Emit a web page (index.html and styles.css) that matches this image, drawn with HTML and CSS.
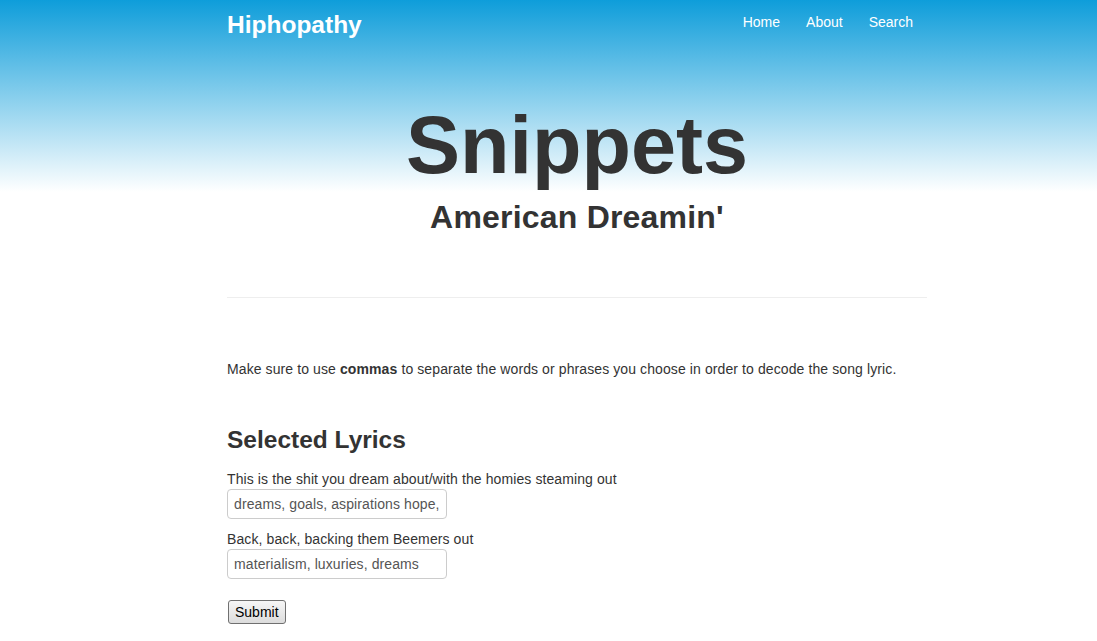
FILE: index.html
```html
<!DOCTYPE html>
<html>
<head>
<meta charset="utf-8">
<title>Hiphopathy - Snippets</title>
<link rel="stylesheet" href="styles.css">
</head>
<body>
<div class="hero">
  <div class="container">
    <nav class="navbar">
      <a class="brand" href="#">Hiphopathy</a>
      <ul class="nav">
        <li><a href="#">Home</a></li>
        <li><a href="#">About</a></li>
        <li><a href="#">Search</a></li>
      </ul>
    </nav>
    <header class="title">
      <h1>Snippets</h1>
      <h2>American Dreamin'</h2>
    </header>
  </div>
</div>
<div class="container">
  <hr class="divider">
  <p class="note">Make sure to use <strong>commas</strong> to separate the words or phrases you choose in order to decode the song lyric.</p>
  <h3 class="section-title">Selected Lyrics</h3>
  <form class="lyrics-form">
    <label class="lyric">This is the shit you dream about/with the homies steaming out</label>
    <input class="field" type="text" value="dreams, goals, aspirations hope, ">
    <label class="lyric">Back, back, backing them Beemers out</label>
    <input class="field" type="text" value="materialism, luxuries, dreams">
    <button class="submit" type="button">Submit</button>
  </form>
</div>
</body>
</html>
```

FILE: styles.css
```css
* { box-sizing: border-box; }
html, body {
  margin: 0;
  padding: 0;
  background: #fff;
  color: #333;
  font-family: "Liberation Sans", Arial, sans-serif;
  font-size: 14px;
  line-height: 20px;
  letter-spacing: 0.1px;
}
.hero {
  background: linear-gradient(to bottom, #0e9dda 0px, #fff 192px);
  height: 192px;
}
.container {
  width: 700px;
  margin-left: 227px;
}
.navbar {
  display: flex;
  justify-content: space-between;
  align-items: flex-start;
  height: 50px;
}
.brand {
  color: #fff;
  font-weight: bold;
  font-size: 24.5px;
  line-height: 24px;
  padding-top: 13px;
  text-decoration: none;
  letter-spacing: 0;
}
.nav {
  display: flex;
  list-style: none;
  margin: 0;
  padding: 0 14px 0 0;
  gap: 26px;
}
.nav a {
  display: block;
  color: #fff;
  text-decoration: none;
  font-size: 14px;
  line-height: 20px;
  padding-top: 12px;
  letter-spacing: 0;
}
.title {
  text-align: center;
  padding-top: 55px;
  letter-spacing: 0;
}
.title h1 {
  margin: 0;
  font-size: 81px;
  line-height: 80px;
  font-weight: bold;
  color: #333;
}
.title h2 {
  margin: 12px 0 0 0;
  font-size: 32px;
  line-height: 40px;
  font-weight: bold;
  color: #333;
  letter-spacing: 0.2px;
}
.divider {
  border: 0;
  border-top: 1px solid #eee;
  margin: 105px 0 0 0;
}
.note {
  margin: 61px 0 0 0;
}
.section-title {
  font-size: 24.5px;
  line-height: 30px;
  margin: 46px 0 0 0;
  font-weight: bold;
  letter-spacing: 0;
}
.lyrics-form {
  display: flex;
  flex-direction: column;
  align-items: flex-start;
  margin-top: 14px;
}
.lyric {
  display: block;
  line-height: 20px;
}
.field {
  width: 220px;
  height: 30px;
  border: 1px solid #ccc;
  border-radius: 4px;
  padding: 4px 6px;
  font-family: "Liberation Sans", Arial, sans-serif;
  font-size: 14px;
  color: #555;
  margin-bottom: 10px;
  letter-spacing: 0.1px;
}
.submit {
  margin-top: 11px;
  font-family: "Liberation Sans", Arial, sans-serif;
  font-size: 14px;
  padding: 2px 6px;
  color: #000;
  background: linear-gradient(#f6f6f6, #dcdcdc);
  border: 1px solid #707070;
  border-radius: 3px;
  height: 24px;
  margin-left: 1px;
}
```
